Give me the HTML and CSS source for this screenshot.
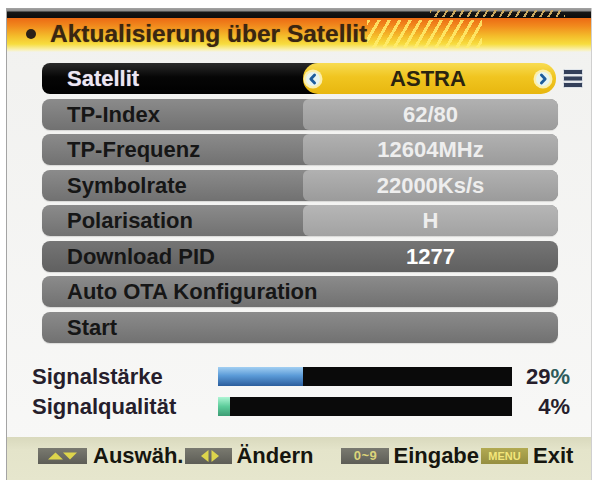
FILE: index.html
```html
<!DOCTYPE html>
<html lang="de">
<head>
<meta charset="utf-8">
<title>Aktualisierung über Satellit</title>
<link rel="stylesheet" href="styles.css">
</head>
<body>
<div class="screen">
  <div class="header">
    <span class="bullet"></span>
    <h1 class="title">Aktualisierung über Satellit</h1>
  </div>
  <div class="content">
    <div class="menu">
      <div class="row-line">
        <div class="row sel">
          <div class="label">Satellit</div>
          <div class="value">
            <svg class="arrow" viewBox="0 0 20 20" width="20" height="20">
              <circle cx="10" cy="10" r="9.5" fill="#fbefae"/>
              <circle cx="10" cy="10" r="7" fill="#e6f4f2"/>
              <path d="M11.6 6 L7.8 10 L11.6 14" fill="none" stroke="#1d5c9c" stroke-width="2.8" stroke-linecap="round" stroke-linejoin="round"/>
            </svg>
            <span class="val-text">ASTRA</span>
            <svg class="arrow" viewBox="0 0 20 20" width="20" height="20">
              <circle cx="10" cy="10" r="9.5" fill="#fbefae"/>
              <circle cx="10" cy="10" r="7" fill="#e6f4f2"/>
              <path d="M8.4 6 L12.2 10 L8.4 14" fill="none" stroke="#1d5c9c" stroke-width="2.8" stroke-linecap="round" stroke-linejoin="round"/>
            </svg>
          </div>
        </div>
        <svg class="list-icon" viewBox="0 0 20 19" width="20" height="19">
          <rect x="0.5" y="0.5" width="19" height="5" rx="1" fill="#34405a" stroke="#dfe4ea" stroke-width="1"/>
          <rect x="0.5" y="7" width="19" height="5" rx="1" fill="#34405a" stroke="#dfe4ea" stroke-width="1"/>
          <rect x="0.5" y="13.5" width="19" height="5" rx="1" fill="#34405a" stroke="#dfe4ea" stroke-width="1"/>
        </svg>
      </div>
      <div class="row"><div class="label">TP-Index</div><div class="value">62/80</div></div>
      <div class="row"><div class="label">TP-Frequenz</div><div class="value">12604MHz</div></div>
      <div class="row"><div class="label">Symbolrate</div><div class="value">22000Ks/s</div></div>
      <div class="row"><div class="label">Polarisation</div><div class="value light">H</div></div>
      <div class="row dark"><div class="label">Download PID</div><div class="value">1277</div></div>
      <div class="row plain"><div class="label">Auto OTA Konfiguration</div></div>
      <div class="row plain"><div class="label">Start</div></div>
    </div>
    <div class="signal">
      <div class="sig-label">Signalstärke</div>
      <div class="bar"><div class="fill blue" style="width:29%"></div></div>
      <div class="pct">29<span class="pct-sign">%</span></div>
      <div class="sig-label">Signalqualität</div>
      <div class="bar"><div class="fill green" style="width:4%"></div></div>
      <div class="pct">4%</div>
    </div>
  </div>
  <div class="footer">
    <span class="key k1">
      <svg viewBox="0 0 49 16" width="49" height="16">
        <polygon points="10,11.5 17.5,4.5 25,11.5" fill="#ddd54c"/>
        <polygon points="25,4.5 39,4.5 32,11.5" fill="#ddd54c"/>
      </svg>
    </span>
    <span class="ftext t1">Auswäh.</span>
    <span class="key k2">
      <svg viewBox="0 0 47 16" width="47" height="16">
        <polygon points="23.5,2 23.5,14 16,8" fill="#ddd54c"/>
        <polygon points="26.5,2 26.5,14 34,8" fill="#ddd54c"/>
      </svg>
    </span>
    <span class="ftext t2">Ändern</span>
    <span class="key k3">0~9</span>
    <span class="ftext t3">Eingabe</span>
    <span class="key k4">MENU</span>
    <span class="ftext t4">Exit</span>
  </div>
</div>
</body>
</html>
```
FILE: styles.css
```css
html, body {
  margin: 0;
  padding: 0;
  background: #ffffff;
}

body {
  font-family: "Liberation Sans", Arial, sans-serif;
}

.screen {
  margin: 8px 0 0 6px;
  width: 586px;
  height: 472px;
  box-sizing: border-box;
  border-left: 1px solid #a4a4a4;
  border-right: 1px solid #cfcfcf;
  background: linear-gradient(#f1f1ef, #f8f8f7);
  display: flex;
  flex-direction: column;
}

/* ---------- header ---------- */
.header {
  height: 44px;
  box-sizing: border-box;
  padding: 10px 0 2px 19px;
  display: flex;
  align-items: center;
  background:
    repeating-linear-gradient(120deg, #c9a862 0 2px, transparent 2px 7px) 423px 2px / 135px 7px no-repeat,
    repeating-linear-gradient(120deg, rgba(255, 238, 110, 0.85) 0 3px, transparent 3px 9px) 360px 12px / 115px 28px no-repeat,
    linear-gradient(#a4a4a4 0, #8c8c8c 3px, #161616 4px, #0c0c0c 10px, #ec6a14 10px, #f18a1d 18px, #f4bc2a 28px, #f7dd3e 36px, #f9f1b8 42px, #f2f2ee 44px);
}

.bullet {
  width: 10px;
  height: 10px;
  border-radius: 50%;
  background: #2a2018;
  margin-right: 14px;
  flex: none;
}

.title {
  margin: 0;
  font-size: 24.5px;
  line-height: 32px;
  font-weight: 700;
  color: #3a2612;
  text-shadow: 0 0 1px rgba(60, 30, 0, 0.5);
  white-space: nowrap;
}

/* ---------- menu ---------- */
.content {
  padding: 11px 0 0 35px;
}

.menu {
  display: flex;
  flex-direction: column;
  gap: 4.5px;
}

.row-line {
  display: flex;
  align-items: center;
  gap: 5px;
}

.row {
  width: 516px;
  height: 31px;
  border-radius: 8px;
  display: flex;
  overflow: hidden;
  font-size: 22px;
  line-height: 31px;
  font-weight: 700;
  background: linear-gradient(#8b8b8b, #717171);
  box-shadow: 0 1px 1px rgba(0, 0, 0, 0.12);
}

.label {
  width: 261px;
  flex: none;
  box-sizing: border-box;
  padding-left: 25px;
  color: #161616;
  white-space: nowrap;
}

.value {
  flex: 1;
  text-align: center;
  color: #eeeeee;
  background: linear-gradient(#b1b1b1, #9b9b9b);
  border-radius: 6px 0 0 6px;
  white-space: nowrap;
}

.value.light {
  background: linear-gradient(#b6b6b6, #a2a2a2);
}

.row.sel {
  background: none;
  box-shadow: none;
  overflow: visible;
}

.sel .label {
  width: 281px;
  margin-right: -20px;
  border-radius: 8px 0 0 8px;
  background: linear-gradient(#2a2a2a, #060606 45%, #000000);
  color: #ece6f2;
  text-shadow: 0 0 1px rgba(200, 190, 230, 0.6);
}

.sel .value {
  display: flex;
  align-items: center;
  padding: 0 3px 0 0;
  margin-right: 2px;
  border-radius: 15px;
  background: linear-gradient(#f8dc52, #f0c520 45%, #e8b70f);
  color: #2a2410;
}

.arrow {
  flex: none;
  display: block;
}

.val-text {
  flex: 1;
  text-align: center;
}

.list-icon {
  display: block;
  flex: none;
  margin-top: -1px;
}

.row.dark {
  background: linear-gradient(#757575, #606060);
}

.dark .value {
  background: none;
  color: #ffffff;
}

.plain .label {
  width: auto;
  flex: 1;
}

/* ---------- signal ---------- */
.signal {
  margin: 19px 0 0 -10px;
  display: grid;
  grid-template-columns: 186px 294px 58px;
  grid-auto-rows: 30px;
  align-items: center;
  font-size: 22px;
  font-weight: 700;
  color: #261e2c;
}

.sig-label {
  white-space: nowrap;
}

.bar {
  height: 19px;
  background: #0a0a0a;
  display: flex;
}

.fill {
  height: 100%;
}

.fill.blue {
  background: linear-gradient(#a2cff2, #5b9bd8 45%, #2b5d9c);
}

.fill.green {
  background: linear-gradient(#aef5d4, #5ccc9a 50%, #3c9c74);
}

.pct {
  text-align: right;
}

.pct-sign {
  color: #2e5a5a;
}

/* ---------- footer ---------- */
.footer {
  margin-top: auto;
  height: 43px;
  box-sizing: border-box;
  padding: 0 0 6px 31px;
  background: linear-gradient(#d9d9bd, #e4e4ca 30%, #e6e6cd);
  display: flex;
  align-items: center;
  font-size: 22px;
  font-weight: 700;
  color: #16160f;
}

.key {
  flex: none;
  height: 16px;
  display: flex;
  align-items: center;
  justify-content: center;
  background: linear-gradient(#7a7a70, #5d5d56);
  font-size: 13px;
  font-weight: 700;
  line-height: 16px;
  letter-spacing: 0.5px;
}

.key svg {
  display: block;
}

.k1 { width: 49px; }
.t1 { margin-left: 6px; }
.k2 { width: 47px; margin-left: 2px; }
.t2 { margin-left: 4px; }
.k3 { width: 48px; margin-left: 28px; color: #dcd47a; }
.t3 { margin-left: 4px; }
.k4 { width: 47px; margin-left: 2px; color: #f3e67a; background: linear-gradient(#b2aa52, #958e40); font-size: 11px; letter-spacing: 0; }
.t4 { margin-left: 5px; }

.ftext {
  white-space: nowrap;
}
```
